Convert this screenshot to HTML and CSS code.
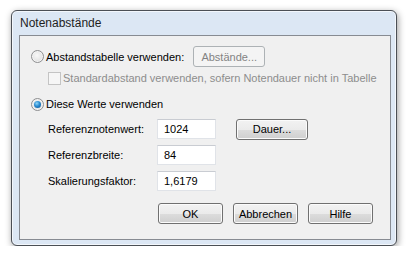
FILE: index.html
```html
<!DOCTYPE html>
<html lang="de">
<head>
    <meta charset="UTF-8">
    <title>Notenabstände</title>
    <link rel="stylesheet" href="styles.css">
</head>
<body>
    <div class="window">
        <div class="title">Notenabstände</div>
        <div class="client">
            <div class="row row1">
                <span class="radio"></span>
                <span class="label">Abstandstabelle verwenden:</span>
                <button class="btn disabled btn_table" disabled>Abstände...</button>
            </div>
            <div class="row row2">
                <span class="check"></span>
                <span class="label grey">Standardabstand verwenden, sofern Notendauer nicht in Tabelle</span>
            </div>
            <div class="row row3">
                <span class="radio checked"></span>
                <span class="label">Diese Werte verwenden</span>
            </div>
            <div class="values">
                <span class="name">Referenznotenwert:</span>
                <span class="field">1024</span>
                <button class="btn">Dauer...</button>
                <span class="name">Referenzbreite:</span>
                <span class="field">84</span>
                <span></span>
                <span class="name">Skalierungsfaktor:</span>
                <span class="field">1,6179</span>
                <span></span>
            </div>
            <div class="buttons">
                <button class="btn">OK</button>
                <button class="btn">Abbrechen</button>
                <button class="btn">Hilfe</button>
            </div>
        </div>
    </div>
</body>
</html>
```
FILE: styles.css
```css
*{
    margin:0;
    padding:0;
    box-sizing: border-box;
}
body{
    background: #fff;
    font-family: "Liberation Sans", Arial, sans-serif;
    font-size: 11px;
    color: #000;
}
.window{
    margin: 10px 0 0 11px;
    width: 386px;
    height: 236px;
    border: 1px solid #4b4f55;
    border-radius: 6px;
    background: #dce7f4;
    box-shadow: 1px 2px 7px 0 rgba(0,0,0,.4), inset 0 0 0 1px #f3f7fc;
    padding: 0 5px 5px 7px;
    display: flex;
    flex-direction: column;
}
.title{
    height: 24px;
    line-height: 24px;
    padding-left: 1px;
    font-size: 12px;
    color: #1e1e1e;
}
.client{
    flex: 1;
    background: #f0f0f0;
    border: 1px solid #878b92;
    padding: 10px 0 0 11px;
}
.row{
    display: flex;
    align-items: center;
}
.row1{
    height: 21px;
}
.row2{
    height: 20px;
    margin-top: 1px;
    padding-left: 17px;
}
.row3{
    height: 20px;
    margin-top: 6px;
}
.label{
    margin-left: 2px;
}
.grey{
    color: #8d8d8d;
}
.radio{
    width: 13px;
    height: 13px;
    border-radius: 50%;
    border: 1px solid #8e8f91;
    background: radial-gradient(circle at 45% 40%, #f8f8f8 0, #e6e6e6 55%, #d0d0d0 100%);
    box-shadow: inset 0 0 0 1px #f4f4f4;
    position: relative;
}
.radio.checked::after{
    content: "";
    position: absolute;
    left: 2px;
    top: 2px;
    width: 7px;
    height: 7px;
    border-radius: 50%;
    background: radial-gradient(circle at 40% 35%, #8fd6f7 0, #2a8bd1 45%, #0d4f8c 100%);
}
.check{
    width: 13px;
    height: 13px;
    border: 1px solid #c4c4c4;
    background: #f6f6f6;
}
.btn{
    font-family: inherit;
    font-size: 11px;
    color: #000;
    height: 21px;
    border: 1px solid #707070;
    border-radius: 3px;
    background: linear-gradient(#f2f2f2 0, #ebebeb 50%, #dddddd 51%, #cfcfcf 100%);
    box-shadow: inset 0 0 0 1px #fbfbfb;
}
.btn.disabled{
    color: #838383;
    border-color: #adb2b5;
    background: #f4f4f4;
    box-shadow: none;
}
.btn_table{
    width: 72px;
    margin-left: 9px;
}
.values{
    display: grid;
    grid-template-columns: 109px 59px 92px;
    grid-auto-rows: 20px;
    row-gap: 6px;
    margin-top: 5px;
    padding-left: 17px;
    align-items: center;
}
.values .btn{
    margin-left: 20px;
    width: 72px;
}
.field{
    height: 20px;
    line-height: 18px;
    background: #fff;
    border: 1px solid #e0e3e8;
    border-top-color: #c9ccd2;
    padding-left: 6px;
}
.buttons{
    display: flex;
    gap: 10px;
    margin-top: 12px;
    padding-left: 127px;
}
.buttons .btn{
    width: 65px;
}
```
